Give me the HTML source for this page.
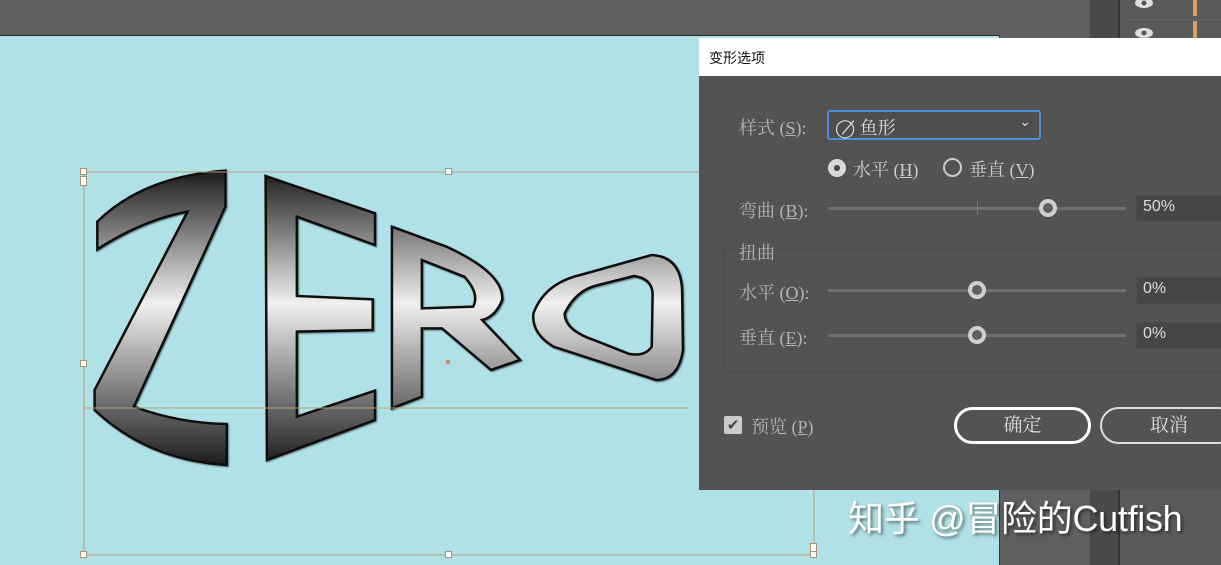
<!DOCTYPE html>
<html><head><meta charset="utf-8"><style>
*{margin:0;padding:0;box-sizing:border-box}
body{width:1221px;height:565px;overflow:hidden;background:#5f5f5f;position:relative;font-family:"Liberation Serif","Noto Serif CJK SC",serif}
.a{position:absolute}
.lbl{color:#b4b4b4;font-size:18px;position:absolute}
.track{position:absolute;height:3px;background:#707070;left:828px;width:298px}
.knob{position:absolute;width:18px;height:18px;border-radius:50%;border:4px solid #cfcfcf;background:#606060}
.inp{position:absolute;left:1136px;width:90px;height:27px;background:#464646;border:1px solid #4c4c4c;color:#ddd;font-family:"Liberation Sans",sans-serif;font-size:16px;padding:2px 6px}
.h{position:absolute;width:7px;height:7px;background:#fff;border:1px solid #b09070}
</style></head><body>
<div class="a" style="left:1090px;top:0;width:28px;height:565px;background:#4a4a4a"></div>
<div class="a" style="left:1118px;top:0;width:2px;height:565px;background:#333"></div>
<div class="a" style="left:1120px;top:0;width:101px;height:565px;background:#5a5a5a"></div>
<div class="a" style="left:1128px;top:19px;width:93px;height:1px;background:#666"></div>
<div class="a" style="left:1193px;top:0;width:4px;height:16px;background:#d9a066"></div>
<div class="a" style="left:1193px;top:21px;width:4px;height:18px;background:#d9a066"></div>
<svg class="a" style="left:1133px;top:0" width="22" height="40"><ellipse cx="11" cy="3" rx="9" ry="5" fill="#ddd"/><circle cx="11" cy="3" r="2.5" fill="#555"/><ellipse cx="11" cy="33" rx="9" ry="5" fill="#ddd"/><circle cx="11" cy="33" r="2.5" fill="#555"/></svg>
<div class="a" style="left:0;top:35px;width:1000px;height:530px;background:#b0e1e6;border-top:1px solid #2a2a2a;border-right:1px solid #333"></div>
<svg class="a" style="left:0;top:0" width="1000" height="565">
<defs><linearGradient id="g" gradientUnits="userSpaceOnUse" x1="0" y1="60" x2="0" y2="950"><stop offset="0" stop-color="#1a1a1a"/><stop offset="0.45" stop-color="#f0f0f0"/><stop offset="1" stop-color="#1a1a1a"/></linearGradient>
<filter id="s"><feDropShadow dx="2" dy="3" stdDeviation="2" flood-opacity="0.5"/></filter></defs>
<g transform="translate(0,150) scale(0.4464,0.3333)" fill="url(#g)" stroke="#111" stroke-width="2.5" vector-effect="non-scaling-stroke" filter="url(#s)" fill-rule="evenodd">
<path vector-effect="non-scaling-stroke" d="M218,298 L218,215 Q320,80 505,62 L505,170 L300,770 Q400,820 508,822 L508,945 Q330,930 212,780 L212,720 L420,185 Q320,210 218,298 Z"/>
<path vector-effect="non-scaling-stroke" d="M595,78 L840,190 L840,285 L665,200 L665,438 L835,448 L835,540 L665,545 L665,800 L840,722 L840,810 L598,930 Z"/>
<path vector-effect="non-scaling-stroke" d="M878,230 L1000,290 Q1130,370 1125,450 Q1110,500 1080,510 L1165,630 L1100,660 L990,535 L945,535 L945,740 L878,775 Z M945,330 L1040,380 Q1075,430 1060,470 L945,475 Z"/>
<path vector-effect="non-scaling-stroke" d="M1195,490 Q1220,400 1300,375 L1460,315 Q1525,320 1528,420 L1530,600 Q1520,690 1470,690 L1240,590 Q1190,550 1195,490 Z M1265,490 Q1290,420 1340,405 L1420,378 Q1460,385 1462,430 L1460,590 Q1445,620 1410,612 L1330,570 Q1265,540 1265,490 Z"/>
</g>
<g stroke="#b8a080" stroke-width="1" fill="none">
<line x1="84" y1="172" x2="700" y2="172"/><line x1="84" y1="172" x2="84" y2="555"/><line x1="84" y1="555" x2="814" y2="555"/><line x1="814" y1="490" x2="814" y2="555"/><line x1="84" y1="408" x2="688" y2="408"/>
</g>
<rect x="446" y="360" width="4" height="4" fill="#c09070"/>
</svg>
<div class="h" style="left:80px;top:168px"></div><div class="h" style="left:80px;top:176px;height:10px"></div>
<div class="h" style="left:445px;top:168px"></div><div class="h" style="left:80px;top:360px"></div>
<div class="h" style="left:80px;top:551px"></div><div class="h" style="left:445px;top:551px"></div><div class="h" style="left:810px;top:543px;height:10px"></div><div class="h" style="left:810px;top:551px"></div>
<div class="a" style="left:699px;top:38px;width:522px;height:452px;background:#535353"></div>
<div class="a" style="left:699px;top:38px;width:522px;height:38px;background:#fff;color:#111;font-family:'Liberation Sans','Noto Sans CJK SC',sans-serif;font-size:14px;padding:10px 10px">变形选项</div>
<div class="lbl" style="left:739px;top:114px">样式 (<u>S</u>):</div>
<div class="a" style="left:827px;top:110px;width:214px;height:30px;border:2px solid #4a8ee0;border-radius:3px;background:#4e4e4e;color:#ddd;font-size:18px;padding:2px 6px">◯̸ 鱼形<span style="position:absolute;right:8px;top:2px;font-size:14px">⌄</span></div>
<div class="a" style="left:828px;top:159px;width:18px;height:18px;border-radius:50%;background:#d8d8d8"><div style="margin:6px;width:6px;height:6px;border-radius:50%;background:#444"></div></div>
<div class="lbl" style="left:853px;top:156px;color:#ccc">水平 (<u>H</u>)</div>
<div class="a" style="left:943px;top:158px;width:19px;height:19px;border-radius:50%;border:2px solid #ccc"></div>
<div class="lbl" style="left:969px;top:156px;color:#ccc">垂直 (<u>V</u>)</div>
<div class="lbl" style="left:739px;top:197px">弯曲 (<u>B</u>):</div>
<div class="track" style="top:207px"></div><div class="a" style="left:977px;top:201px;width:1px;height:14px;background:#777"></div>
<div class="knob" style="left:1039px;top:199px"></div>
<div class="inp" style="top:195px">50%</div>
<div class="a" style="left:723px;top:249px;width:510px;height:124px;border:1px solid #4a4a4a;border-radius:3px"></div>
<div class="lbl" style="left:739px;top:239px;background:#535353">扭曲</div>
<div class="lbl" style="left:739px;top:279px">水平 (<u>O</u>):</div>
<div class="track" style="top:289px"></div><div class="knob" style="left:968px;top:281px"></div>
<div class="inp" style="top:277px">0%</div>
<div class="lbl" style="left:739px;top:324px">垂直 (<u>E</u>):</div>
<div class="track" style="top:334px"></div><div class="knob" style="left:968px;top:326px"></div>
<div class="inp" style="top:322px">0%</div>
<div class="a" style="left:724px;top:416px;width:18px;height:18px;background:#ccc;border-radius:2px;color:#444;font-size:15px;line-height:18px;text-align:center;font-family:'DejaVu Sans',sans-serif">✔</div>
<div class="lbl" style="left:751px;top:413px">预览 (<u>P</u>)</div>
<div class="a" style="left:954px;top:407px;width:137px;height:37px;border:3px solid #fff;border-radius:19px;color:#ddd;font-size:19px;text-align:center;line-height:31px">确定</div>
<div class="a" style="left:1100px;top:407px;width:137px;height:37px;border:2px solid #ddd;border-radius:19px;color:#ddd;font-size:19px;line-height:33px;padding-left:48px">取消</div>
<div class="a" style="left:848px;top:490px;color:#fff;font-family:'Liberation Sans','Noto Sans CJK SC',sans-serif;font-size:36px;letter-spacing:-0.3px;text-shadow:2px 2px 3px rgba(0,0,0,.5);white-space:nowrap">知乎 @冒险的Cutfish</div>
</body></html>
